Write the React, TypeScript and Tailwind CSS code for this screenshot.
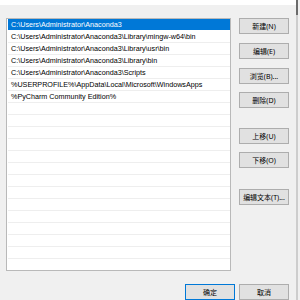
const PATHS = [
  'C:\\Users\\Administrator\\Anaconda3',
  'C:\\Users\\Administrator\\Anaconda3\\Library\\mingw-w64\\bin',
  'C:\\Users\\Administrator\\Anaconda3\\Library\\usr\\bin',
  'C:\\Users\\Administrator\\Anaconda3\\Library\\bin',
  'C:\\Users\\Administrator\\Anaconda3\\Scripts',
  '%USERPROFILE%\\AppData\\Local\\Microsoft\\WindowsApps',
  '%PyCharm Community Edition%',
];

const SIDE_BUTTONS = [
  { label: '新建(N)', mt: 'mt-0' },
  { label: '编辑(E)', mt: 'mt-[9px]' },
  { label: '浏览(B)...', mt: 'mt-[9px]' },
  { label: '删除(D)', mt: 'mt-[8px]' },
  { label: '上移(U)', mt: 'mt-[20px]' },
  { label: '下移(O)', mt: 'mt-[8px]' },
  { label: '编辑文本(T)...', mt: 'mt-[21px]' },
];

function DialogButton({ label, primary, className = '' }: { label: string; primary?: boolean; className?: string }) {
  return (
    <button
      type="button"
      className={`w-[50px] h-[16px] shrink-0 flex items-center justify-center bg-[#e1e1e1] border text-[7px] leading-none text-black font-['Noto_Sans','Noto_Sans_CJK_SC',sans-serif] ${primary ? 'border-[#0078d7]' : 'border-[#adadad]'} ${className}`}
    >
      {label}
    </button>
  );
}

export default function App() {
  const rows = Array.from({ length: 21 }, (_, i) => PATHS[i] ?? '');

  return (
    <div className="w-[300px] h-[300px] bg-[#f0f0f0] flex overflow-hidden">
      <div className="w-[296px] flex flex-col">
        {/* clipped header strip */}
        <div className="h-[5px] bg-white shrink-0" />

        <div className="flex h-[279px] shrink-0">
          {/* path list */}
          <div className="mt-[13px] ml-[6px] w-[225px] h-[253px] bg-white border border-[#b9b9b9] pl-px overflow-hidden flex flex-col font-['Liberation_Sans',Arial,sans-serif]">
            {rows.map((p, i) => (
              <div
                key={i}
                className={`h-[12px] shrink-0 border-b ${i === 0 ? 'bg-[#0078d7] text-white border-white' : 'text-black border-[#eeeeee]'} pl-[3px] text-[7.2px] leading-[11px] whitespace-nowrap`}
              >
                {p}
              </div>
            ))}
          </div>

          {/* side buttons */}
          <div className="ml-[8px] mt-[13px] flex flex-col">
            {SIDE_BUTTONS.map((b) => (
              <DialogButton key={b.label} label={b.label} className={b.mt} />
            ))}
          </div>
        </div>

        {/* bottom row */}
        <div className="flex pl-[185px] gap-[4px]">
          <DialogButton label="确定" primary />
          <DialogButton label="取消" />
        </div>
      </div>

      {/* window edge */}
      <div className="w-[2px] flex flex-col">
        <div className="h-[15px] bg-[#6b6b6b]" />
        <div className="flex-1 bg-[#cdcdcd]" />
      </div>
    </div>
  );
}
